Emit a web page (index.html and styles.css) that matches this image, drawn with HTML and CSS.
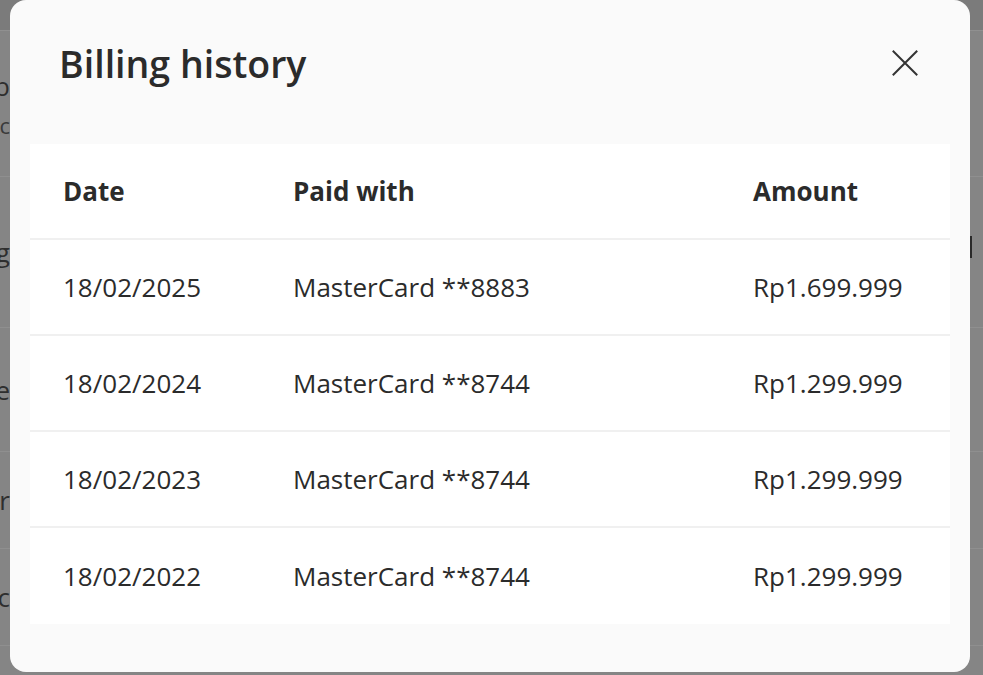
FILE: index.html
```html
<!DOCTYPE html>
<html lang="en">
<head>
<meta charset="utf-8">
<title>Billing history</title>
<link rel="stylesheet" href="styles.css">
</head>
<body>
<div class="page">
  <div class="page-top"></div>
  <div class="page-row tall">
    <div class="edge">
      <span class="pt-main">Sub</span>
      <span class="pt-sub">Mc</span>
    </div>
  </div>
  <div class="page-row mid"><div class="edge"><span class="pt-main">Billing</span></div></div>
  <div class="page-row mid2"><div class="edge"><span class="pt-main">Date</span></div></div>
  <div class="page-row small"><div class="edge"><span class="pt-main">For</span></div></div>
  <div class="page-row small"><div class="edge"><span class="pt-main">Etc</span></div></div>
  <span class="page-mark"></span>
</div>

<div class="overlay">
  <div class="modal" role="dialog" aria-labelledby="modal-title">
    <div class="modal-header">
      <h2 id="modal-title" class="modal-title">Billing history</h2>
      <button class="close-btn" aria-label="Close">
        <svg width="26" height="26" viewBox="0 0 26 26" fill="none" stroke="#333" stroke-width="2" stroke-linecap="square">
          <path d="M1.5 1.5 L24.5 24.5 M24.5 1.5 L1.5 24.5"/>
        </svg>
      </button>
    </div>
    <table class="history">
      <colgroup>
        <col class="c1"><col class="c2"><col class="c3">
      </colgroup>
      <thead>
        <tr><th>Date</th><th>Paid with</th><th>Amount</th></tr>
      </thead>
      <tbody>
        <tr><td>18/02/2025</td><td>MasterCard **8883</td><td>Rp1.699.999</td></tr>
        <tr><td>18/02/2024</td><td>MasterCard **8744</td><td>Rp1.299.999</td></tr>
        <tr><td>18/02/2023</td><td>MasterCard **8744</td><td>Rp1.299.999</td></tr>
        <tr><td>18/02/2022</td><td>MasterCard **8744</td><td>Rp1.299.999</td></tr>
      </tbody>
    </table>
  </div>
</div>
</body>
</html>
```

FILE: styles.css
```css
html, body {
  margin: 0;
  padding: 0;
  height: 100%;
  overflow: hidden;
}

body {
  background: #858585;
  font-family: "Open Sans", "Noto Sans", "Liberation Sans", sans-serif;
  color: #2b2b2b;
}

/* ---- background page (dimmed) ---- */
.page {
  position: relative;
  height: 100%;
  overflow: hidden;
}

.page-top {
  height: 30px;
  background: #7b7b7b;
  border-bottom: 1px solid #909090;
}

.page-row {
  border-bottom: 1px solid #8f8f8f;
  display: flex;
  align-items: center;
  color: #2e2e2e;
  font-size: 26px;
}

.edge {
  width: 10px;
  overflow: hidden;
  display: flex;
  flex-direction: column;
  align-items: flex-end;
  gap: 6px;
  white-space: nowrap;
}

.page-row.tall { height: 145px; }
.page-row.mid { height: 150px; }
.page-row.mid2 { height: 123px; }
.page-row.small { height: 96px; }

.pt-sub {
  font-size: 22px;
  color: #3a3a3a;
}

.page-mark {
  position: absolute;
  left: 969px;
  top: 236px;
  width: 3px;
  height: 22px;
  background: #2a2a2a;
}

/* ---- modal ---- */
.overlay {
  position: fixed;
  inset: 0;
}

.modal {
  position: absolute;
  left: 10px;
  top: 0;
  width: 960px;
  height: 672px;
  box-sizing: border-box;
  padding: 0 20px 48px;
  background: #fafafa;
  border-radius: 16px;
}

.modal-header {
  height: 126px;
  margin-bottom: 18px;
  display: flex;
  align-items: center;
  justify-content: space-between;
  padding: 0 32px 0 29px;
}

.modal-title {
  margin: 0;
  font-size: 37.5px;
  font-weight: 600;
  color: #2b2b2b;
}

.close-btn {
  width: 26px;
  height: 26px;
  padding: 0;
  border: 0;
  background: transparent;
  display: flex;
  cursor: pointer;
}

.history {
  width: 920px;
  border-collapse: collapse;
  background: #ffffff;
  table-layout: fixed;
}

.c1 { width: 25%; }
.c2 { width: 50%; }
.c3 { width: 25%; }

.history th,
.history td {
  height: 94px;
  padding: 0 0 0 33px;
  text-align: left;
  font-size: 26px;
  color: #2b2b2b;
  white-space: nowrap;
}

.history th {
  font-weight: 700;
}

.history td {
  font-weight: 400;
}

.history thead tr,
.history tbody tr:not(:last-child) {
  border-bottom: 2px solid #f0f0f0;
}

.history tbody tr:last-child td {
  height: 96px;
}
```
